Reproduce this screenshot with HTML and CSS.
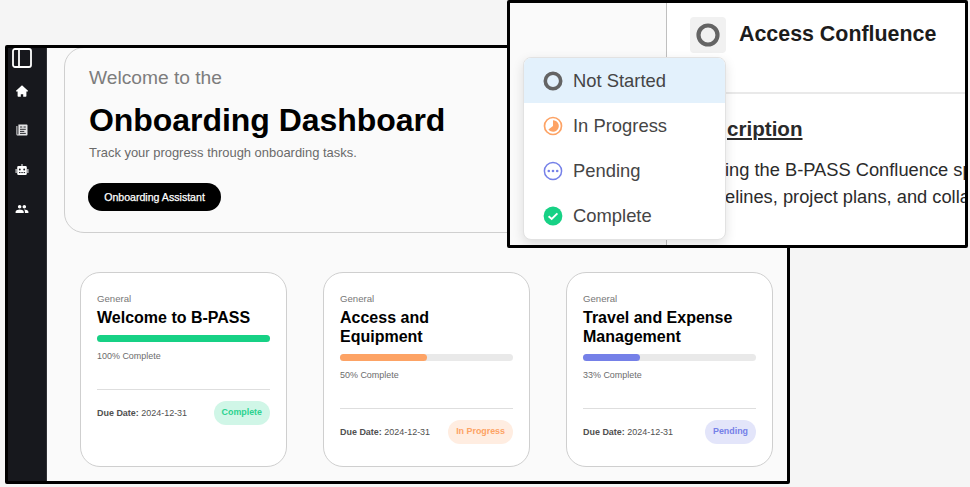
FILE: index.html
```html
<!DOCTYPE html>
<html lang="en">
<head>
<meta charset="utf-8">
<title>Onboarding Dashboard</title>
<link rel="stylesheet" href="styles.css">
</head>
<body>
<div class="window">
  <nav class="sidebar">
    <svg class="toggle" viewBox="0 0 20 20"><rect x="1" y="1" width="18" height="18" rx="2" fill="none" stroke="#fff" stroke-width="1.8"/><path d="M7 1v18" stroke="#fff" stroke-width="1.8"/></svg>
    <svg class="nav-icon" viewBox="0 0 14 14"><path d="M7 1.2 13 6.7q.3.8-.5.8H11.400v4.500q0 .7-.7.700H8.200V10.300h-2.400v2.400H3.300q-.7 0-.7-.7V7.500H1.500Q.7 7.500 1 6.700z" fill="#fff"/></svg>
    <svg class="nav-icon" viewBox="0 0 14 14"><path d="M3.400 1.500h8.300q.8 0 .8.800v9.400q0 .8-.8.800H2.600q-1.200 0-1.200-1.200V3h1v8.200q0 .4.500.4t.5-.5z" fill="#e4e4e6"/><path d="M5 4h2.300M5 6.300h5.800M5 8.400h4.300M5 10.400h5.800M8.500 4h2.300" stroke="#17181d" stroke-width=".9"/></svg>
    <svg class="nav-icon" viewBox="0 0 14 14"><path d="M6.500 1h1v2H10.500q1.300 0 1.300 1.300v6.400q0 1.300-1.300 1.300h-7q-1.300 0-1.300-1.300V4.300Q2.200 3 3.500 3h3zM.6 6h1v4h-1zM12.400 6h1v4h-1z" fill="#fff"/><circle cx="4.800" cy="6.500" r=".95" fill="#17181d"/><circle cx="9.200" cy="6.500" r=".95" fill="#17181d"/><path d="M4 9.600h1.500M6.300 9.600h1.500M8.600 9.600h1.500" stroke="#17181d"/></svg>
    <svg class="nav-icon" viewBox="0 0 24 24"><path fill="#fff" d="M16 11c1.660 0 2.990-1.340 2.990-3S17.660 5 16 5s-3 1.340-3 3 1.340 3 3 3zm-8 0c1.660 0 2.990-1.340 2.990-3S9.660 5 8 5 5 6.340 5 8s1.340 3 3 3zm0 2c-2.330 0-7 1.170-7 3.500V19h14v-2.500c0-2.330-4.670-3.500-7-3.500zm8 0c-.29 0-.62.02-.97.05 1.160.84 1.970 1.970 1.970 3.450V19h6v-2.500c0-2.330-4.670-3.500-7-3.500z"/></svg>
  </nav>
  <main class="content">
    <section class="hero">
      <div class="hero-kicker">Welcome to the</div>
      <h1>Onboarding Dashboard</h1>
      <p class="hero-sub">Track your progress through onboarding tasks.</p>
      <button class="assistant">Onboarding Assistant</button>
    </section>
    <section class="cards">
      <article class="card done">
        <div class="category">General</div>
        <h2>Welcome to B-PASS</h2>
        <div class="track"><div class="fill" style="width:100%"></div></div>
        <div class="percent">100% Complete</div>
        <footer><span class="due"><b>Due Date:</b> 2024-12-31</span><span class="badge">Complete</span></footer>
      </article>
      <article class="card progress">
        <div class="category">General</div>
        <h2>Access and Equipment</h2>
        <div class="track"><div class="fill" style="width:50%"></div></div>
        <div class="percent">50% Complete</div>
        <footer><span class="due"><b>Due Date:</b> 2024-12-31</span><span class="badge">In Progress</span></footer>
      </article>
      <article class="card pending">
        <div class="category">General</div>
        <h2>Travel and Expense Management</h2>
        <div class="track"><div class="fill" style="width:33%"></div></div>
        <div class="percent">33% Complete</div>
        <footer><span class="due"><b>Due Date:</b> 2024-12-31</span><span class="badge">Pending</span></footer>
      </article>
    </section>
  </main>
</div>

<div class="detail">
  <div class="gutter"></div>
  <div class="task">
    <header class="task-head">
      <span class="status-box"><svg viewBox="0 0 24 24"><circle cx="12" cy="12" r="9.500" fill="none" stroke="#646464" stroke-width="4.200"/></svg></span>
      <span class="task-title">Access Confluence</span>
    </header>
    <div class="task-body">
      <h3>cription</h3>
      <p>ing the B-PASS Confluence sp<br>elines, project plans, and colla</p>
    </div>
  </div>
  <ul class="menu">
    <li class="selected"><svg viewBox="0 0 20 20"><circle cx="10" cy="10" r="7.700" fill="none" stroke="#646464" stroke-width="3.600"/></svg>Not Started</li>
    <li><svg viewBox="0 0 20 20"><circle cx="10" cy="10" r="8.500" fill="none" stroke="#fda365" stroke-width="1.700"/><path d="M10 4.200A5.800 5.800 0 1 1 5.400 13.500L10 10z" fill="#fda365"/></svg>In Progress</li>
    <li><svg viewBox="0 0 20 20"><circle cx="10" cy="10" r="8.600" fill="none" stroke="#7580e8" stroke-width="1.500"/><circle cx="5.800" cy="10" r="1.300" fill="#7580e8"/><circle cx="10" cy="10" r="1.300" fill="#7580e8"/><circle cx="14.200" cy="10" r="1.300" fill="#7580e8"/></svg>Pending</li>
    <li><svg viewBox="0 0 20 20"><circle cx="10" cy="10" r="9.400" fill="#17d185"/><path d="M5.600 10.200 8.700 13l5.700-5.600" fill="none" stroke="#fff" stroke-width="1.900"/></svg>Complete</li>
  </ul>
</div>
</body>
</html>
```

FILE: styles.css
```css
* { box-sizing: border-box; }

body {
  margin: 0;
  height: 487px;
  padding: 45px 0 0 5px;
  overflow: hidden;
  background: #f5f5f5;
  font-family: "Liberation Sans", Arial, sans-serif;
}

.window {
  display: flex;
  width: 785px;
  height: 439px;
  overflow: hidden;
  border: 3px solid #000;
  border-radius: 2px;
  background: #fafafa;
}

.sidebar {
  display: flex;
  flex-direction: column;
  align-items: center;
  width: 39px;
  padding-right: 11px;
  background: #17181d;
  border-right: 1px solid #303136;
}

.toggle { width: 20px; height: 20px; flex: none; margin-bottom: 15.500px; }
.nav-icon { width: 14px; height: 14px; flex: none; margin-bottom: 25.600px; }

.content { flex: 1; padding: 0 14px 0 17px; }

.hero {
  height: 186px;
  margin-top: -1px;
  padding: 18px 24px 0 23px;
  border: 1px solid #cfcfcf;
  border-radius: 20px;
}

.hero-kicker { padding-left: 1px; color: #7d7d7d; font-size: 19.200px; line-height: 24px; }

h1 { margin: 11px 0 0; padding-left: 1px; font-size: 32px; letter-spacing: -.05px; line-height: 38px; color: #000; }

.hero-sub { margin: 6px 0 0; padding-left: 1px; color: #6a6a6a; font-size: 12.950px; line-height: 16px; }

.assistant {
  display: block;
  width: 133px;
  height: 28px;
  margin-top: 22px;
  padding: 0;
  border: 0;
  border-radius: 14px;
  background: #000;
  color: #fff;
  font: 10.600px "Liberation Sans", Arial, sans-serif;
  -webkit-text-stroke: .25px #fff;
}

.cards { display: flex; gap: 36px; padding: 39px 0 0 16px; }

.card {
  flex: none;
  width: 207px;
  height: 195px;
  padding: 19px 16px 0;
  border: 1px solid #cfcfcf;
  border-radius: 20px;
  background: #fff;
}

.category { color: #777; font-size: 9.600px; line-height: 14px; }

h2 { margin: 2px 0 8px; color: #000; font-size: 16px; line-height: 19.200px; }

.track { height: 7px; border-radius: 4px; background: #e9e9e9; }
.fill { height: 100%; border-radius: 4px; }

.percent { margin-top: 7px; color: #6c6c6c; font-size: 8.960px; line-height: 14px; }

footer {
  display: flex;
  align-items: center;
  justify-content: space-between;
  margin-top: 26px;
  padding-top: 11px;
  border-top: 1px solid #dedede;
}

.due { color: #505050; font-size: 8.960px; }

.badge { padding: 0 8px; border-radius: 12px; font-size: 8.900px; font-weight: bold; line-height: 23.500px; }

.done .fill { background: #17d185; }
.done .badge { background: #d0f6e7; color: #2bd28f; }
.progress .fill { background: #fda365; }
.progress .badge { background: #ffede1; color: #fda365; }
.pending .fill { background: #7580e8; }
.pending .badge { background: #e3e5fa; color: #7580e8; }

.detail {
  position: absolute;
  left: 507px;
  top: 0;
  display: flex;
  width: 461px;
  height: 248px;
  overflow: hidden;
  border: 3px solid #000;
  border-radius: 2px;
  background: #fff;
}

.gutter { flex: none; width: 157px; background: #fafafa; border-right: 1px solid #bfbfbf; }

.task { flex: none; width: 298px; overflow: hidden; }

.task-head {
  display: flex;
  gap: 13px;
  height: 91px;
  padding: 14px 0 0 23px;
  border-bottom: 2px solid #e9e9e9;
}

.status-box {
  display: flex;
  align-items: center;
  justify-content: center;
  width: 36px;
  height: 36px;
  border-radius: 4px;
  background: #f1f1f1;
}
.status-box svg { width: 24px; height: 24px; }

.task-title { color: #1c1c1c; font-size: 21.400px; font-weight: bold; line-height: 34px; white-space: nowrap; }

.task-body { padding: 22px 0 0 58px; white-space: nowrap; }

h3 {
  margin: 0 0 15px;
  padding-left: 2px;
  color: #2a2a2a;
  font-size: 20.600px;
  line-height: 25px;
  text-decoration: underline;
  text-decoration-thickness: 1.500px;
  text-underline-offset: 2px;
}

.task-body p { margin: 0; color: #2b2b2b; font-size: 18.300px; line-height: 27px; }

.menu {
  position: absolute;
  left: 13px;
  top: 54px;
  width: 203px;
  margin: 0;
  padding: 0;
  overflow: hidden;
  list-style: none;
  border: 1px solid #e2e2e2;
  border-radius: 8px;
  background: #fff;
  box-shadow: 0 4px 12px rgba(0, 0, 0, .12);
}

.menu li {
  display: flex;
  align-items: center;
  gap: 10px;
  height: 45.200px;
  padding-left: 19px;
  color: #454545;
  font-size: 18.400px;
}
.menu svg { width: 20px; height: 20px; }
.menu .selected { background: #e3f1fc; }
```
